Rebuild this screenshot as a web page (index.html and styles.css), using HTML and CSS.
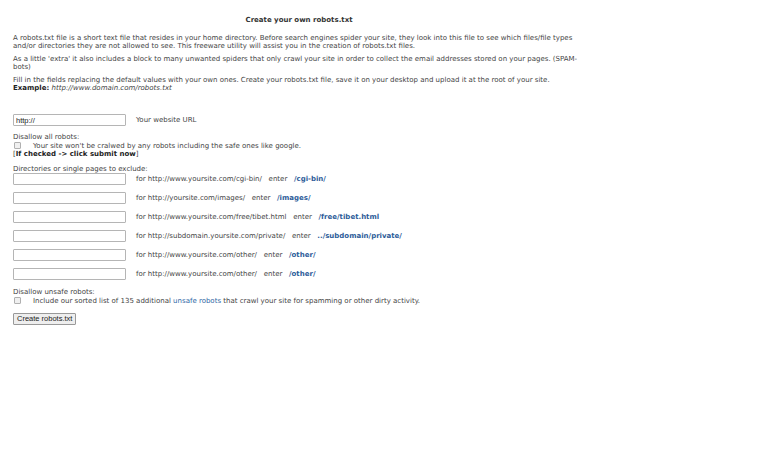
FILE: index.html
```html
<!DOCTYPE html>
<html lang="en">
<head>
    <meta charset="UTF-8">
    <title>Create your own robots.txt</title>
    <link rel="stylesheet" href="styles.css">
</head>
<body>
    <div class="page">
        <h1>Create your own robots.txt</h1>

        <p>A robots.txt file is a short text file that resides in your home directory. Before search engines spider your site, they look into this file to see which files/file types and/or directories they are not allowed to see. This freeware utility will assist you in the creation of robots.txt files.</p>
        <p>As a little 'extra' it also includes a block to many unwanted spiders that only crawl your site in order to collect the email addresses stored on your pages. (SPAM-bots)</p>
        <p>Fill in the fields replacing the default values with your own ones. Create your robots.txt file, save it on your desktop and upload it at the root of your site.<br>
        <b>Example:</b> <i>http://www.domain.com/robots.txt</i></p>

        <form class="robots-form">
            <!-- website url -->
            <div class="row url-row">
                <input type="text" value="http://">
                <span>Your website URL</span>
            </div>

            <!-- disallow all -->
            <div class="label">Disallow all robots:</div>
            <div class="check-row">
                <input type="checkbox">
                <span>Your site won't be cralwed by any robots including the safe ones like google.</span>
            </div>
            <div class="note">[<b>If checked -&gt; click submit now</b>]</div>

            <!-- directories -->
            <div class="label dirs-label">Directories or single pages to exclude:</div>
            <div class="row"><input type="text"><span>for http://www.yoursite.com/cgi-bin/ &nbsp; enter &nbsp; <b class="path">/cgi-bin/</b></span></div>
            <div class="row"><input type="text"><span>for http://yoursite.com/images/ &nbsp; enter &nbsp; <b class="path">/images/</b></span></div>
            <div class="row"><input type="text"><span>for http://www.yoursite.com/free/tibet.html &nbsp; enter &nbsp; <b class="path">/free/tibet.html</b></span></div>
            <div class="row"><input type="text"><span>for http://subdomain.yoursite.com/private/ &nbsp; enter &nbsp; <b class="path">../subdomain/private/</b></span></div>
            <div class="row"><input type="text"><span>for http://www.yoursite.com/other/ &nbsp; enter &nbsp; <b class="path">/other/</b></span></div>
            <div class="row"><input type="text"><span>for http://www.yoursite.com/other/ &nbsp; enter &nbsp; <b class="path">/other/</b></span></div>

            <!-- unsafe robots -->
            <div class="label unsafe-label">Disallow unsafe robots:</div>
            <div class="check-row">
                <input type="checkbox">
                <span>Include our sorted list of 135 additional <a href="#">unsafe robots</a> that crawl your site for spamming or other dirty activity.</span>
            </div>

            <button type="button">Create robots.txt</button>
        </form>
    </div>
</body>
</html>
```

FILE: styles.css
```css
body {
    margin: 0;
    padding: 0 13px;
    font-family: "DejaVu Sans", Verdana, sans-serif;
    font-size: 7px;
    line-height: 8px;
    color: #444;
    background: #fff;
}
.page {
    width: 572px;
}
h1 {
    margin: 16px 0 10px;
    text-align: center;
    font-size: 7px;
    line-height: 8px;
    color: #333;
}
p {
    margin: 0 0 5px;
}
p b {
    color: #222;
}
.robots-form {
    margin-top: 22px;
}
.row {
    display: flex;
    align-items: center;
    gap: 10px;
    height: 19px;
}
.row input {
    width: 113px;
    height: 12px;
    margin: 0;
    padding: 0 2px;
    box-sizing: border-box;
    border: 1px solid #b5b5b5;
    border-radius: 1px;
    font-family: "Liberation Sans", Arial, sans-serif;
    font-size: 7.5px;
    color: #222;
}
.url-row {
    height: 12px;
    margin-bottom: 7px;
}
.dirs-label {
    margin-top: 7px;
}
.dirs-label + .row {
    margin-top: -4px;
}
.unsafe-label {
    margin-top: 5px;
}
.check-row {
    display: flex;
    align-items: center;
    gap: 12px;
    height: 9px;
}
.check-row input {
    appearance: none;
    width: 7px;
    height: 7px;
    margin: 0 0 0 1px;
    border: 1px solid #b0b0b0;
    border-radius: 1px;
    background: #f0f0f0;
}
.note b {
    color: #222;
}
.path {
    color: #2d5c99;
}
a {
    color: #2f67a6;
    text-decoration: none;
}
button {
    margin-top: 8px;
    height: 12px;
    padding: 0 3px;
    font-family: "Liberation Sans", Arial, sans-serif;
    font-size: 7.5px;
    line-height: 8px;
    color: #222;
    background: #eee;
    border: 1px solid #999;
    border-radius: 1px;
}
```
